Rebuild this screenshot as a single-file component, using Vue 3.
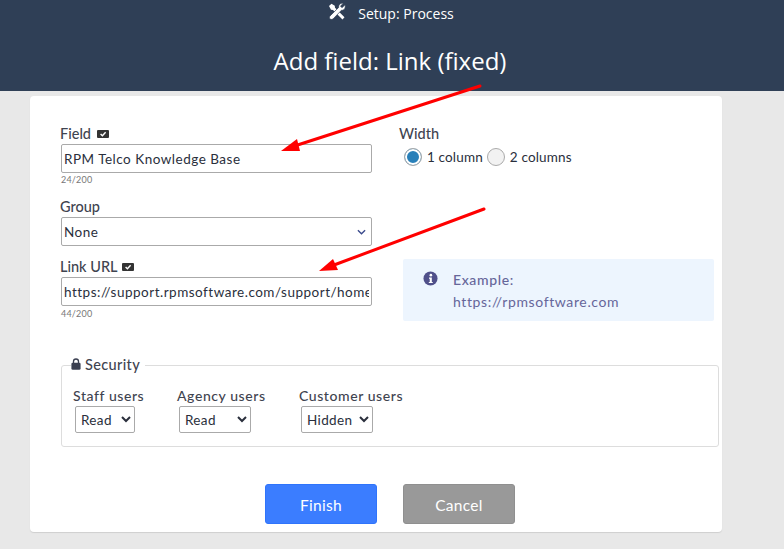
<script setup>
const securityRoles = [
  { label: 'Staff users', value: 'Read', options: ['Read', 'Edit', 'Hidden'], cls: 'w-read' },
  { label: 'Agency users', value: 'Read', options: ['Read', 'Edit', 'Hidden', 'Limited'], cls: 'w-wide' },
  { label: 'Customer users', value: 'Hidden', options: ['Read', 'Edit', 'Hidden'], cls: 'w-wide' },
]
</script>

<template>
  <div class="page">
    <header class="top">
      <div class="crumb">
        <svg class="tools" viewBox="0 0 18 18" width="18" height="18">
          <path d="M1 3 3.500 .8 6.800 2.800 7 4.800 16.500 14.300 14.500 16.500 5 7 3 6.800Z" fill="#fff" />
          <path d="M17 1.800 14.300 4.400 13 4 12.700 2.800 15.300 .4C12.800-.4 10.300 1.600 10.700 4.400L1.800 13.200 1.200 15 3 16.600 5 16 13.500 7.200C16 7.800 18 5 17 1.800Z" fill="#fff" stroke="#2f3f56" stroke-width=".7" />
        </svg>
        <span>Setup: Process</span>
      </div>
      <h1>Add field: Link (fixed)</h1>
    </header>

    <main class="card">
      <div class="columns">
        <div class="col-left">
          <label class="lbl">Field <span class="badge badge-field"><svg viewBox="0 0 12 8" width="12" height="8"><rect width="12" height="8" rx="1" fill="#333" /><path d="M3.600 4 5.400 5.800 8.600 2.200" fill="none" stroke="#fff" stroke-width="1.400" /></svg></span></label>
          <input class="ctl" value="RPM Telco Knowledge Base" />
          <div class="count">24/200</div>

          <label class="lbl group-lbl">Group</label>
          <div class="fake-select">
            <span>None</span>
            <svg viewBox="0 0 10 6" width="9" height="6"><path d="M1 1 5 5 9 1" fill="none" stroke="#3a4a8c" stroke-width="1.500" /></svg>
          </div>

          <label class="lbl url-lbl">Link URL <span class="badge"><svg viewBox="0 0 12 8" width="12" height="8"><rect width="12" height="8" rx="1" fill="#333" /><path d="M3.600 4 5.400 5.800 8.600 2.200" fill="none" stroke="#fff" stroke-width="1.400" /></svg></span></label>
          <input class="ctl" value="https://support.rpmsoftware.com/support/home" />
          <div class="count count-url">44/200</div>
        </div>

        <div class="col-right">
          <div class="lbl">Width</div>
          <div class="radios">
            <input type="radio" name="w" class="radio" checked />
            <span>1 column</span>
            <input type="radio" name="w" class="radio" />
            <span>2 columns</span>
          </div>
          <div class="info">
            <svg class="info-ic" viewBox="0 0 16 16" width="15" height="15">
              <circle cx="8" cy="8" r="7.500" fill="#50508a" />
              <circle cx="8.400" cy="4.400" r="1.400" fill="#fff" />
              <path d="M6.400 7h3v4.600h1v1.200H6.200v-1.200h1V8.200h-.8Z" fill="#fff" />
            </svg>
            <div class="info-text">
              <div class="info-title">Example:</div>
              <div>https://rpmsoftware.com</div>
            </div>
          </div>
        </div>
      </div>

      <fieldset class="security">
        <legend>
          <svg viewBox="0 0 12 14" width="10" height="12"><path d="M3 6V4a3 3 0 0 1 6 0v2" fill="none" stroke="#3a3f50" stroke-width="1.600" /><rect x=".5" y="5.500" width="11" height="8.500" rx="1.600" fill="#3a3f50" /></svg>
          Security
        </legend>
        <div class="roles">
          <div v-for="r in securityRoles" :key="r.label" class="role">
            <div class="role-lbl">{{ r.label }}</div>
            <select class="role-sel" :class="r.cls" :value="r.value">
              <option v-for="o in r.options" :key="o">{{ o }}</option>
            </select>
          </div>
        </div>
      </fieldset>

      <div class="actions">
        <button class="btn primary">Finish</button>
        <button class="btn muted">Cancel</button>
      </div>
    </main>

    <svg class="arrows" width="784" height="549" viewBox="0 0 784 549">
      <path d="M480 86 296 145.500" stroke="#f00" stroke-width="3" stroke-linecap="round" />
      <path d="M281 151 297 139 300 151Z" fill="#f00" />
      <path d="M484 209 334 265" stroke="#f00" stroke-width="3" stroke-linecap="round" />
      <path d="M319 271 333 259 338 270Z" fill="#f00" />
    </svg>
  </div>
</template>

<style>
html, body { margin: 0; padding: 0; background: #e8e8e8; }
</style>

<style scoped>
.page {
  position: relative;
  height: 549px;
  overflow: hidden;
  background: #e8e8e8;
  font-family: Lato, "Liberation Sans", sans-serif;
  color: #3f4450;
}
.top {
  height: 91px;
  background: #2f3f56;
  color: #fff;
  font-family: "Open Sans", "Noto Sans", sans-serif;
  text-align: center;
  box-sizing: border-box;
  padding-top: 3px;
}
.crumb {
  display: flex;
  justify-content: center;
  align-items: center;
  gap: 12px;
  font-size: 14px;
  height: 20px;
  padding-right: 2px;
}
.tools { margin-top: -2px; }
.top h1 {
  margin: 21px 4px 0 0;
  font-size: 24px;
  font-weight: 400;
  line-height: 33px;
}
.card {
  width: 692px;
  height: 436px;
  box-sizing: border-box;
  margin: 5px 0 0 30px;
  padding: 29px 0 0 30px;
  background: #fff;
  border-radius: 4px;
  box-shadow: 0 1px 1px #cfcfcf;
}
.columns {
  display: flex;
  height: 220px;
}
.col-left {
  width: 312px;
}
.lbl {
  display: flex;
  align-items: center;
  gap: 4px;
  font-size: 14.500px;
  line-height: 18px;
  font-weight: 500;
  color: #3f4450;
}
.badge { display: inline-flex; }
.badge-field { margin-left: 2px; }
.ctl, .fake-select {
  display: flex;
  align-items: center;
  width: 311px;
  height: 29px;
  box-sizing: border-box;
  margin: 0 0 0 1px;
  padding: 0 2px;
  border: 1px solid #aaa;
  border-radius: 2px;
  background: #fff;
  font: 400 13.500px Lato, "Liberation Sans", sans-serif;
  letter-spacing: .5px;
  color: #2a2f3c;
  outline: none;
}
.lbl + .ctl { margin-top: 1px; }
.fake-select { justify-content: space-between; padding-right: 5px; margin-top: 1px; }
.count {
  margin: 1px 0 0 1px;
  font-size: 9px;
  line-height: 11px;
  letter-spacing: .2px;
  color: #777;
}
.count-url { margin-top: 2px; }
.group-lbl { margin-top: 13px; }
.url-lbl { margin-top: 12px; }
.col-right {
  margin-left: 27px;
  width: 320px;
}
.radios {
  display: flex;
  align-items: center;
  margin: 4px 0 0 4px;
  height: 20px;
  font-size: 13.500px;
  letter-spacing: .15px;
  color: #2a2f3c;
}
.radio {
  appearance: none;
  width: 18px;
  height: 18px;
  margin: 0 5px 0 1px;
  box-sizing: border-box;
  border: 1px solid #aaa;
  border-radius: 50%;
  background: #f2f2f2;
}
.radio:nth-of-type(2) { margin-left: 4px; }
.radio:checked {
  background: #2980b9;
  box-shadow: inset 0 0 0 2px #fff;
}
.info {
  display: flex;
  width: 311px;
  height: 62px;
  box-sizing: border-box;
  margin: 92px 0 0 4px;
  padding: 10px 0 0 20px;
  background: #edf5fe;
  border-radius: 2px;
  color: #50508a;
  font-size: 14px;
  letter-spacing: .62px;
}
.info-ic { margin-top: 2px; }
.info-text { margin-left: 15px; line-height: 22px; color: #66669a; }
.info-title { font-weight: 500; }
.security {
  width: 658px;
  height: 91px;
  box-sizing: border-box;
  margin: 11px 0 0 1px;
  padding: 0 0 0 11px;
  border: 1px solid #ddd;
  border-radius: 3px;
}
.security legend {
  padding: 0 5px 0 0;
  margin-left: -2px;
  font-size: 14.500px;
  line-height: 18px;
  font-weight: 500;
  letter-spacing: .35px;
  color: #3f4450;
}
.roles {
  display: flex;
  margin-top: 13px;
}
.role-lbl {
  font-size: 14px;
  line-height: 18px;
  font-weight: 500;
  letter-spacing: .58px;
  color: #3f4450;
}
.role:nth-child(1) { width: 104px; }
.role:nth-child(2) { width: 122px; }
.role-sel {
  display: block;
  height: 27px;
  margin: 1px 0 0 2px;
  padding: 0 0 0 1px;
  border: 1px solid #aaa;
  border-radius: 2px;
  background: #fff;
  font: 400 13.500px Lato, "Liberation Sans", sans-serif;
  letter-spacing: .35px;
  color: #2a2f3c;
}
.w-read { width: 60px; }
.w-wide { width: 72px; }
.actions {
  display: flex;
  gap: 26px;
  margin: 37px 0 0 205px;
}
.btn {
  width: 112px;
  height: 40px;
  border: 1px solid;
  border-radius: 3px;
  color: #fff;
  font: 400 15.500px Lato, "Liberation Sans", sans-serif;
  letter-spacing: .3px;
  padding-top: 2px;
}
.primary { background: #3b7dff; border-color: #2f74fb; }
.muted { background: #999; border-color: #8f8f8f; }
.arrows {
  position: absolute;
  inset: 0;
  pointer-events: none;
}
</style>
